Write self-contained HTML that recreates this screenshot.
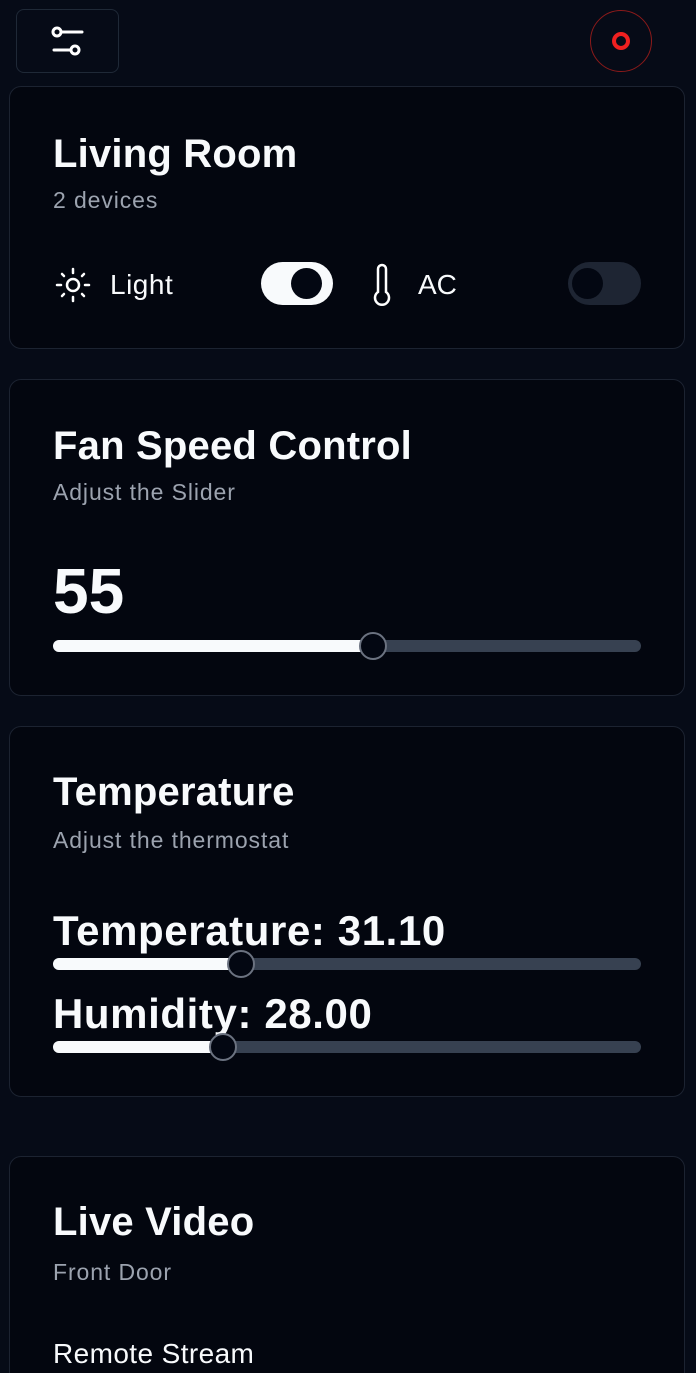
<!DOCTYPE html>
<html style="height:1373px;overflow:hidden"><head><meta charset="utf-8"><style>
*{margin:0;padding:0;box-sizing:border-box}
body{width:696px;height:1373px;background:#060b17;font-family:"Liberation Sans",sans-serif;color:#f8fafc;position:relative;overflow:hidden}
.a{position:absolute;line-height:1;white-space:nowrap}
.card{position:absolute;left:9px;width:676px;background:#03060f;border:1.5px solid #1c2331;border-radius:12px}
.t{font-size:40px;font-weight:bold;letter-spacing:0.2px}
.s{font-size:23px;color:#9ca3af;letter-spacing:0.9px}
.track{position:absolute;left:53px;width:588px;height:12px;border-radius:6px;background:#374151}
.fill{position:absolute;left:0;top:0;height:12px;border-radius:6px;background:#f8fafc}
.thumb{position:absolute;width:28px;height:28px;border-radius:50%;background:#030712;border:2px solid #6b7280;top:-8px}
</style></head><body>
<div class="a" style="left:16px;top:9px;width:103px;height:64px;border:1.5px solid #1f2937;border-radius:8px"></div>
<svg class="a" style="left:48px;top:22px" width="40" height="40" viewBox="0 0 40 40" fill="none" stroke="#fff" stroke-width="3" stroke-linecap="round">
<circle cx="9" cy="10" r="4"/><line x1="13" y1="10" x2="34" y2="10"/>
<circle cx="27" cy="28" r="4"/><line x1="6" y1="28" x2="23" y2="28"/></svg>
<div class="a" style="left:590px;top:10px;width:62px;height:62px;border:1.5px solid #8b1a1a;border-radius:50%"></div>
<div class="a" style="left:612px;top:32px;width:18px;height:18px;border:4px solid #ef2020;border-radius:50%"></div>

<div class="card" style="top:86px;height:263px"></div>
<div class="a t" style="left:53px;top:134px">Living Room</div>
<div class="a s" style="left:53px;top:189px">2 devices</div>
<svg class="a" style="left:53px;top:265px" width="40" height="40" viewBox="0 0 40 40" fill="none" stroke="#fff" stroke-width="2.5" stroke-linecap="round">
<circle cx="20" cy="20" r="6"/><line x1="20" y1="4" x2="20" y2="8"/><line x1="20" y1="32" x2="20" y2="36"/><line x1="4" y1="20" x2="8" y2="20"/><line x1="32" y1="20" x2="36" y2="20"/><line x1="9" y1="9" x2="11" y2="11"/><line x1="29" y1="29" x2="31" y2="31"/><line x1="9" y1="31" x2="11" y2="29"/><line x1="29" y1="11" x2="31" y2="9"/></svg>
<div class="a" style="left:110px;top:271px;font-size:28px;letter-spacing:0.5px">Light</div>
<div class="a" style="left:261px;top:262px;width:72px;height:43px;border-radius:22px;background:#f8fafc"></div>
<div class="a" style="left:291px;top:268px;width:31px;height:31px;border-radius:50%;background:#030712"></div>
<svg class="a" style="left:368px;top:262px" width="28" height="44" viewBox="0 0 28 44" fill="none" stroke="#fff" stroke-width="2.5">
<path d="M10 30 V7 a4 4 0 0 1 8 0 V30 a7 7 0 1 1 -8 0 Z"/></svg>
<div class="a" style="left:418px;top:271px;font-size:28px">AC</div>
<div class="a" style="left:568px;top:262px;width:73px;height:43px;border-radius:22px;background:#1e2533"></div>
<div class="a" style="left:572px;top:268px;width:31px;height:31px;border-radius:50%;background:#030712"></div>

<div class="card" style="top:379px;height:317px"></div>
<div class="a t" style="left:53px;top:426px">Fan Speed Control</div>
<div class="a s" style="left:53px;top:481px">Adjust the Slider</div>
<div class="a" style="left:53px;top:559px;font-size:64px;font-weight:bold">55</div>
<div class="track" style="top:640px"><div class="fill" style="width:320px"></div><div class="thumb" style="left:306px"></div></div>

<div class="card" style="top:726px;height:371px"></div>
<div class="a t" style="left:53px;top:772px">Temperature</div>
<div class="a s" style="left:53px;top:829px">Adjust the thermostat</div>
<div class="a" style="left:53px;top:910px;font-size:42px;font-weight:bold;letter-spacing:0.6px">Temperature: 31.10</div>
<div class="track" style="top:958px"><div class="fill" style="width:188px"></div><div class="thumb" style="left:174px"></div></div>
<div class="a" style="left:53px;top:993px;font-size:42px;font-weight:bold;letter-spacing:0.6px">Humidity: 28.00</div>
<div class="track" style="top:1041px"><div class="fill" style="width:170px"></div><div class="thumb" style="left:156px"></div></div>

<div class="card" style="top:1156px;height:230px"></div>
<div class="a t" style="left:53px;top:1202px">Live Video</div>
<div class="a s" style="left:53px;top:1261px">Front Door</div>
<div class="a" style="left:53px;top:1340px;font-size:28px;letter-spacing:0.4px">Remote Stream</div>
</body></html>
